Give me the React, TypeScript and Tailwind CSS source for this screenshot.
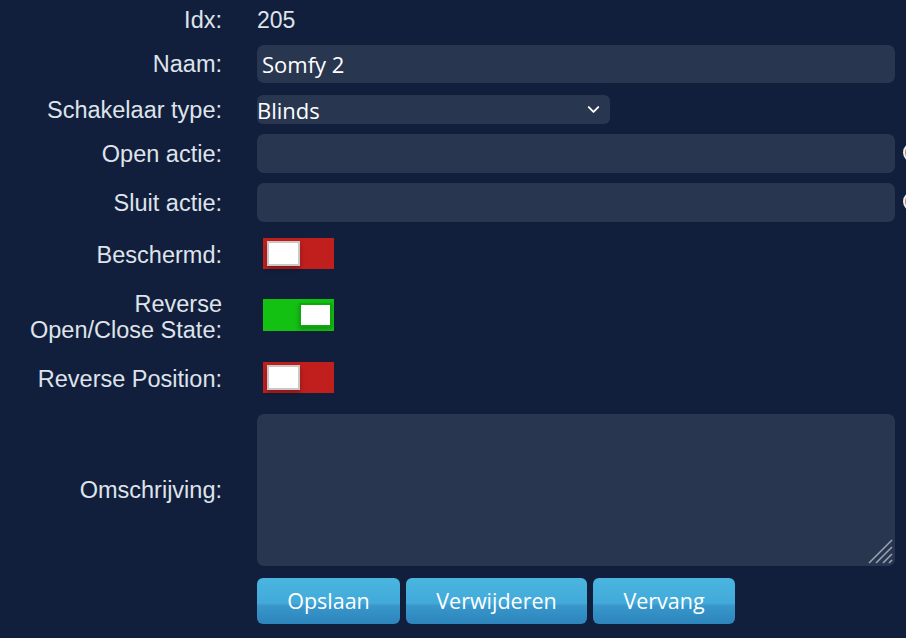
import { ChevronDown } from 'lucide-react';

const labelCls =
  "w-[222px] shrink-0 text-right text-[23.5px] leading-[26px] text-[#dfe3ea] font-['Liberation_Sans',Arial,sans-serif]";
const inputCls =
  "w-[638px] shrink-0 rounded-[7px] bg-[#283650] px-[5px] text-[22px] text-white font-['Open_Sans',sans-serif] outline-none";

const Toggle = ({ on }: { on: boolean }) =>
  on ? (
    <div className="ml-[6px] flex h-[32px] w-[71px] items-center justify-end bg-[#13c113] pr-[2px]">
      <div className="h-[24px] w-[33px] border-2 border-[#0fa60f] bg-white shadow-[0_2px_4px_rgba(0,0,0,0.25)]" />
    </div>
  ) : (
    <div className="ml-[6px] flex h-[31px] w-[71px] items-start bg-[#c11f1d] pl-[4px] pt-[3px]">
      <div className="h-[25px] w-[33px] border-2 border-[#c8c8c8] bg-white shadow-[0_3px_5px_rgba(0,0,0,0.3)]" />
    </div>
  );

const InfoDot = () => (
  <div className="ml-[8px] mt-[-2px] h-[21px] w-[21px] shrink-0 rounded-full border-2 border-[#e9eef7] bg-[#c9843f]" />
);

export default function App() {
  return (
    <div className="h-[638px] w-[906px] overflow-hidden bg-[#111f3d] pt-[5px]">
      {/* Idx */}
      <div className="flex h-[30px] items-center">
        <div className={labelCls}>Idx:</div>
        <div className="ml-[35px] text-[23px] text-[#dfe3ea] font-['Liberation_Sans',Arial,sans-serif]">205</div>
      </div>

      {/* Naam */}
      <div className="mt-[10px] flex h-[38px] items-center">
        <div className={labelCls}>Naam:</div>
        <input className={`ml-[35px] h-[38px] ${inputCls}`} defaultValue="Somfy 2" />
      </div>

      {/* Schakelaar type */}
      <div className="mt-[12px] flex h-[29px] items-center">
        <div className={labelCls}>Schakelaar type:</div>
        <div className="relative ml-[35px] flex h-[29px] w-[353px] items-center rounded-[6px] bg-[#283650] font-['Open_Sans',sans-serif] text-[22px] text-white">
          <span className="leading-none">Blinds</span>
          <ChevronDown className="absolute right-[7px] top-[5px] text-white" size={19} strokeWidth={2.4} />
        </div>
      </div>

      {/* Open actie */}
      <div className="mt-[10px] flex h-[39px] items-center">
        <div className={labelCls}>Open actie:</div>
        <input className={`ml-[35px] h-[39px] ${inputCls}`} />
        <InfoDot />
      </div>

      {/* Sluit actie */}
      <div className="mt-[10px] flex h-[39px] items-center">
        <div className={labelCls}>Sluit actie:</div>
        <input className={`ml-[35px] h-[39px] ${inputCls}`} />
        <InfoDot />
      </div>

      {/* Beschermd */}
      <div className="mt-[16px] flex h-[31px] items-center">
        <div className={`${labelCls} pt-[3px]`}>Beschermd:</div>
        <div className="ml-[35px]">
          <Toggle on={false} />
        </div>
      </div>

      {/* Reverse Open/Close State */}
      <div className="mt-[22px] flex items-start">
        <div className={labelCls}>
          Reverse
          <br />
          Open/Close State:
        </div>
        <div className="ml-[35px] mt-[8px]">
          <Toggle on={true} />
        </div>
      </div>

      {/* Reverse Position */}
      <div className="mt-[19px] flex h-[31px] items-center">
        <div className={`${labelCls} pt-[2px]`}>Reverse Position:</div>
        <div className="ml-[35px]">
          <Toggle on={false} />
        </div>
      </div>

      {/* Omschrijving */}
      <div className="mt-[21px] flex h-[152px] items-center">
        <div className={labelCls}>Omschrijving:</div>
        <div className="relative ml-[35px]">
          <textarea className={`block h-[152px] resize-none ${inputCls}`} />
          <svg className="absolute bottom-[2px] right-[2px]" width="26" height="26" viewBox="0 0 26 26">
            <g stroke="#9aa3b2" strokeWidth="1.6">
              <line x1="25" y1="2" x2="2" y2="25" />
              <line x1="25" y1="9" x2="9" y2="25" />
              <line x1="25" y1="16" x2="16" y2="25" />
              <line x1="25" y1="22" x2="22" y2="25" />
            </g>
          </svg>
        </div>
      </div>

      {/* Buttons */}
      <div className="mt-[12px] flex gap-[6px] pl-[257px]">
        {[
          { label: 'Opslaan', w: 'w-[143px]' },
          { label: 'Verwijderen', w: 'w-[181px]' },
          { label: 'Vervang', w: 'w-[142px]' },
        ].map((b) => (
          <button
            key={b.label}
            className={`${b.w} h-[46px] rounded-[6px] bg-[linear-gradient(to_bottom,#4ab6e0_0%,#42a9d9_55%,#3897cc_60%,#2c84bb_100%)] font-['Open_Sans',sans-serif] text-[21.5px] text-white`}
          >
            {b.label}
          </button>
        ))}
      </div>
    </div>
  );
}
